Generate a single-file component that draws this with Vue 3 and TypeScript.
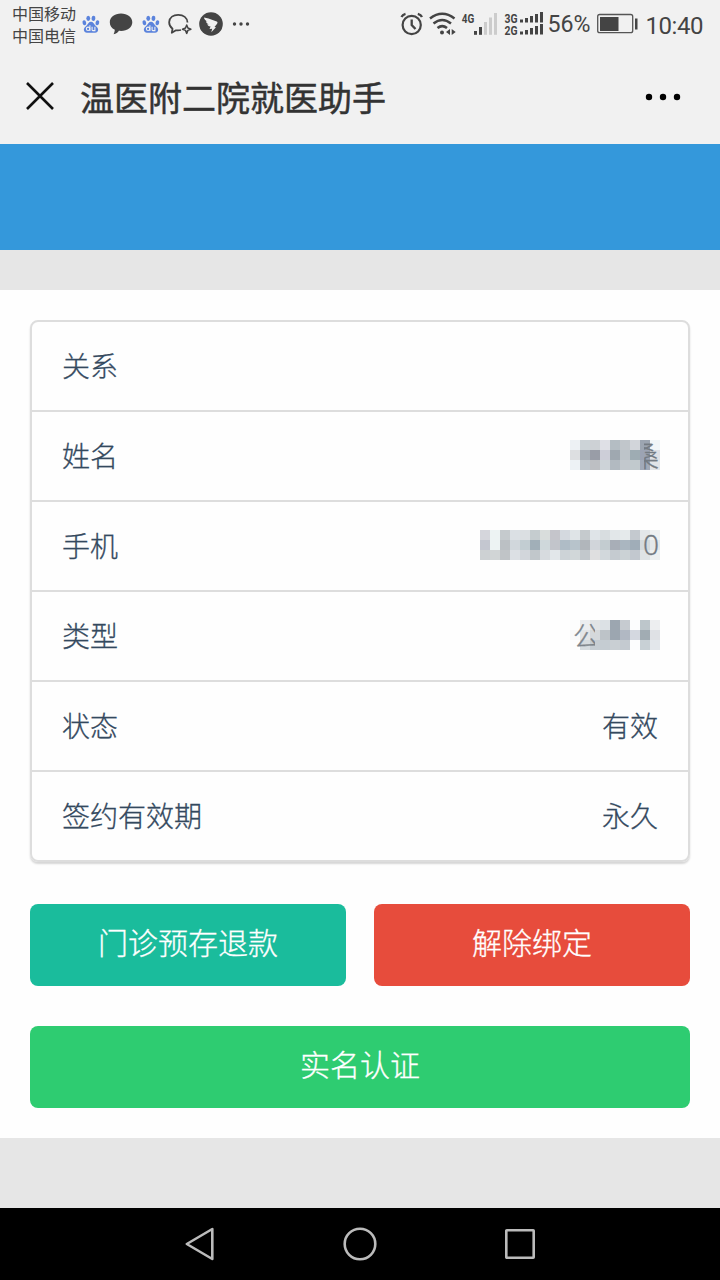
<script setup lang="ts">
interface Row {
  label: string
  value?: string
  mosaic?: string[][]
  hint?: string
  kind?: 'name' | 'phone' | 'type'
}

const rows: Row[] = [
  { label: '关系' },
  {
    label: '姓名',
    hint: '桑',
    kind: 'name',
    mosaic: [
      ['#edf1f4', '#ccd3d7', '#cdd1d5', '#dfe0e6', '#b4bdc3', '#c1c6cb', '#d2d5da', '#9ca5b1', '#f0f5f8'],
      ['#dddfe1', '#abb2ba', '#999da7', '#cdced8', '#9fa8b0', '#bdc4c9', '#9eacb3', '#9ca3b3', '#dfe1e6'],
      ['#edf2f5', '#c1c8ce', '#bdbfc3', '#cdd3d8', '#b2bac1', '#c2c8cd', '#c1c9cd', '#a1a9b7', '#e1e4e8'],
    ],
  },
  {
    label: '手机',
    hint: '0',
    kind: 'phone',
    mosaic: [
      ['#d5d6dc', '#edf3f3', '#c5cacd', '#dbe0e4', '#dbdfe2', '#c5cccf', '#d9dddc', '#c5c5cb', '#d4d9df', '#dfe4e7', '#c5cacd', '#dfe4e8', '#d8dde0', '#e2e7e9', '#e5eaeb', '#c4c9cf', '#e4e7e9', '#eef1f2'],
      ['#c4c7d0', '#edf3f3', '#bbc0c4', '#d1d7dc', '#c2cdd2', '#a1afb8', '#cfd8db', '#c2c5cb', '#afbcc6', '#b7c3cb', '#b1b6bb', '#d1d5da', '#c3ccd0', '#a8aeb7', '#aab6c0', '#a0adb8', '#d4dadd', '#e4e8ea'],
      ['#cdd1d3', '#d1d5d6', '#c0c4c7', '#dce0e4', '#d2d6db', '#c1c7cb', '#d7dbdf', '#e2e7ea', '#cdd3d7', '#d1d7d9', '#c2c8cc', '#dfdfe0', '#d2d8dc', '#c5cbd0', '#cbd2d5', '#c2c8cf', '#dfe3e5', '#edf0f1'],
    ],
  },
  {
    label: '类型',
    hint: '公',
    kind: 'type',
    mosaic: [
      ['#fdfdfd', '#eceeef', '#e1e4e6', '#dce1e5', '#9ca6b0', '#c6cbd0', '#fcfdfe', '#bdc6cb', '#edeef0'],
      ['#f9f9f9', '#e3e5e7', '#d5d8db', '#bdc3c8', '#9ca6b0', '#b1b8c3', '#d4d8e0', '#a1acb3', '#dfe1e5'],
      ['#fdfdfd', '#d5dbdf', '#c6cdd3', '#c5ccd2', '#c9cfd3', '#c4cad0', '#fcfdfe', '#c8d0d5', '#e3e7eb'],
    ],
  },
  { label: '状态', value: '有效' },
  { label: '签约有效期', value: '永久' },
]
</script>

<template>
  <div class="screen">
    <header class="status">
      <div class="carriers"><span>中国移动</span><span>中国电信</span></div>
      <svg v-for="n in 2" :key="n" class="paw" :class="'paw' + n" viewBox="0 0 22 22">
        <g fill="#5b83dc">
          <ellipse cx="3.7" cy="9.7" rx="2" ry="2.8" transform="rotate(-15 3.7 9.7)" />
          <ellipse cx="8" cy="4.8" rx="2.1" ry="2.9" />
          <ellipse cx="13.7" cy="4.8" rx="2.1" ry="2.9" transform="rotate(8 13.7 4.8)" />
          <ellipse cx="18" cy="9.7" rx="2" ry="2.8" transform="rotate(15 18 9.7)" />
          <path d="M11 8.6C8.6 8.6 8 11 6 12.8 3 15.2 2.6 17 3.6 19 4.6 21 7 20.6 11 20.6S17.4 21 18.4 19C19.4 17 19 15.2 16 12.8 14 11 13.4 8.6 11 8.6Z" />
        </g>
        <g fill="none" stroke="#f1f1f1" stroke-width="1.2">
          <circle cx="7.8" cy="16.3" r="1.9" /><path d="M9.8 12.5V18.6M12.2 14V17.2Q12.2 18.3 13.4 18.3H15.3V14" />
        </g>
      </svg>
      <svg class="chat" viewBox="0 0 24 24"><path fill="#444" d="M12 1.5C5.6 1.5.8 5.2.8 10.3c0 3.5 1.8 6 5 7.5-.2 2-.6 3.4-1.2 4.5 2.5-.5 4.3-1.9 5.3-3.5.7.1 1.4.1 2.1.1 6.5 0 11.3-3.5 11.3-8.6S18.4 1.5 12 1.5Z" /></svg>
      <svg class="spark" viewBox="0 0 24 24" fill="none" stroke="#444" stroke-width="1.8" stroke-linejoin="round">
        <path d="M13 18C11.300 18.500 9.800 18.600 8 18.300L3.800 20.800 4.500 16.800C2.200 15 1 12.800 1.200 10 1.600 5.500 5.300 2.900 10.200 2.900 15.500 2.900 19.200 5.800 19.500 10.500" />
        <path d="M18.700 13 19.900 16 22.900 17.200 19.900 18.400 18.700 21.400 17.500 18.400 14.500 17.200 17.500 16Z" stroke-width="1.500" />
      </svg>
      <svg class="bird" viewBox="0 0 24 24"><circle cx="12" cy="12" r="11.800" fill="#444" /><path fill="#f1f1f1" d="M5 5.400 9.500 6.600 17.700 9.400C19 9.900 18.500 11 17.700 12.200L15.500 15.100 17 15.300 12.300 20.300 13.200 16.800 10.500 17 11.600 14.400C9.500 14.300 8.600 13.500 8.300 12.300L10 12.200C7.800 11.400 7.200 10.600 7 9.200L8.500 9.400C6.300 8.400 5.200 7 5 5.400Z" /></svg>
      <svg class="more" viewBox="0 0 18 6" fill="#444"><circle cx="2.500" cy="3" r="1.700" /><circle cx="9" cy="3" r="1.700" /><circle cx="15.500" cy="3" r="1.700" /></svg>
      <svg class="signals" viewBox="400 0 320 48">
        <g fill="none" stroke="#444" stroke-width="2.200">
          <circle cx="411.700" cy="25" r="9.100" />
          <path d="M411.700 19.500V25L415.500 29M401.500 17Q402.500 14.600 405.500 13.800M417.800 13.800Q421 14.600 422 17" stroke-width="2.300" />
          <path d="M430 18.500Q442.200 9 454.500 18.500" stroke-width="2.500" />
          <path d="M433.500 23.500Q442.200 16.500 451 23.500M437.500 28Q442.200 24.200 447 28" stroke-width="2.500" />
        </g>
        <g fill="#444">
          <circle cx="442" cy="32.500" r="2" /><path d="M450 29V35L446 32ZM451.700 29V35L455.700 32Z" />
          <g class="net">
            <text x="461.800" y="22.500" textLength="12.500" lengthAdjust="spacingAndGlyphs">4G</text>
            <text x="504.500" y="22.500" textLength="13" lengthAdjust="spacingAndGlyphs">3G</text>
            <text x="504.500" y="34.800" textLength="13" lengthAdjust="spacingAndGlyphs">2G</text>
          </g>
          <rect x="474" y="31" width="3" height="3.800" /><rect x="479" y="27" width="3" height="7.800" />
          <g fill="#ccc"><rect x="484" y="22" width="3" height="12.800" /><rect x="489" y="17.500" width="3" height="17.300" /><rect x="494" y="13" width="3" height="21.800" /></g>
          <rect x="520" y="19.500" width="3" height="3" /><rect x="525" y="18" width="3" height="4.500" /><rect x="530" y="16" width="3" height="6.500" /><rect x="535" y="14" width="3" height="8.500" /><rect x="540" y="12" width="3" height="10.500" />
          <rect x="520" y="31.500" width="3" height="3" /><rect x="525" y="30" width="3" height="4.500" /><rect x="530" y="28" width="3" height="6.500" /><rect x="535" y="26" width="3" height="8.500" /><rect x="540" y="24" width="3" height="10.500" />
          <text x="547.500" y="32" class="num" textLength="43" lengthAdjust="spacingAndGlyphs">56%</text>
          <rect x="600" y="17" width="18.500" height="14" /><rect x="635" y="18.500" width="2.500" height="11" />
          <text x="645.500" y="33.500" class="num clock" textLength="58" lengthAdjust="spacing">10:40</text>
        </g>
        <rect x="597.700" y="14.500" width="35" height="18.200" rx="2" fill="none" stroke="#555" stroke-width="1.300" />
      </svg>
    </header>

    <div class="titlebar">
      <svg class="close" viewBox="0 0 28 28"><path d="M1 1 27 27M27 1 1 27" fill="none" stroke="#111" stroke-width="2.600" /></svg>
      <h1>温医附二院就医助手</h1>
      <svg class="menu" viewBox="0 0 36 8"><circle cx="4" cy="4" r="3.200" /><circle cx="18" cy="4" r="3.200" /><circle cx="32" cy="4" r="3.200" /></svg>
    </div>

    <div class="banner"></div>

    <main>
      <section class="card">
        <div v-for="row in rows" :key="row.label" class="row">
          <span>{{ row.label }}</span>
          <span v-if="row.value">{{ row.value }}</span>
          <div v-if="row.mosaic" class="masked">
            <svg :width="row.mosaic[0].length * 10" height="30" shape-rendering="crispEdges">
              <template v-for="(line, y) in row.mosaic" :key="y">
                <rect v-for="(c, x) in line" :key="x" :x="x * 10" :y="y * 10" width="10" height="10" :fill="c" />
              </template>
            </svg>
            <span class="hint" :class="row.kind">{{ row.hint }}</span>
          </div>
        </div>
      </section>
      <div class="actions">
        <button class="teal">门诊预存退款</button>
        <button class="red">解除绑定</button>
      </div>
      <button class="green">实名认证</button>
    </main>

    <nav>
      <svg viewBox="0 0 36 36"><path d="M4.800 18 30.300 3V33Z" /></svg>
      <svg viewBox="0 0 36 36"><circle cx="18" cy="18" r="15.300" /></svg>
      <svg viewBox="0 0 36 36"><rect x="4.300" y="4.300" width="27.400" height="27.400" rx=".5" /></svg>
    </nav>
  </div>
</template>

<style>
body { margin: 0; }
</style>

<style scoped>
.screen {
  width: 720px;
  height: 1280px;
  overflow: hidden;
  display: flex;
  flex-direction: column;
  background: #e6e6e6;
  font-family: "Noto Sans CJK SC", sans-serif;
}
svg { display: block; flex: none; }
.status {
  height: 48px;
  display: flex;
  align-items: center;
  background: #f1f1f1;
  color: #444;
}
.carriers {
  width: 64px;
  margin-left: 12px;
  display: flex;
  flex-direction: column;
  font-size: 16px;
  line-height: 22px;
}
.paw { width: 20px; height: 22px; order: 1; margin-left: 5px; }
.chat { width: 24px; height: 24px; order: 2; margin-left: 8px; }
.paw2 { order: 3; margin-left: 8px; }
.spark { width: 24px; height: 24px; order: 4; margin-left: 7px; }
.bird { width: 24px; height: 24px; order: 5; margin-left: 7px; }
.more { width: 18px; height: 6px; order: 6; margin-left: 9px; }
.signals { width: 320px; height: 48px; order: 7; margin-left: auto; }
.net { font: 700 12.5px Roboto, sans-serif; }
.num { font: 400 24px Roboto, sans-serif; }
.clock { font-size: 24px; }
.titlebar {
  height: 96px;
  display: flex;
  align-items: center;
  background: #f1f1f1;
}
.close { width: 28px; height: 28px; margin-left: 26px; }
h1 {
  margin: 0 auto 0 26px;
  padding-top: 2px;
  font-size: 34px;
  font-weight: 400;
  -webkit-text-stroke: .5px #333;
  line-height: 48px;
  color: #333;
}
.menu { width: 36px; height: 8px; margin-right: 39px; margin-top: 2px; }
.banner { height: 106px; background: #3498db; }
main {
  box-sizing: border-box;
  height: 848px;
  margin-top: 40px;
  padding: 30px;
  background: #fefefe;
}
.card {
  box-sizing: border-box;
  height: 542px;
  border: 2px solid #ddd;
  border-radius: 8px;
  box-shadow: 0 2px 2px rgba(0, 0, 0, .16);
}
.row {
  box-sizing: border-box;
  height: 90px;
  padding: 0 30px 2px;
  display: flex;
  justify-content: space-between;
  align-items: center;
  border-bottom: 2px solid #ddd;
  font-size: 28px;
  font-weight: 300;
  -webkit-text-stroke: .3px currentColor;
  color: #34495e;
}
.row:last-child { height: 88px; border: 0; }
.masked { position: relative; margin-right: -2px; }
.hint {
  position: absolute;
  top: 0;
  line-height: 30px;
  color: #737a82;
}
.name { right: 1px; clip-path: inset(0 0 0 13px); }
.phone { right: 1px; top: -1px; font-family: "Noto Sans", sans-serif; }
.type { left: 3px; opacity: .9; clip-path: inset(0 6px 0 0); }
.actions { display: flex; gap: 28px; margin: 42px 0 40px; }
button {
  flex: 1;
  height: 82px;
  padding: 0 0 8px;
  border: 0;
  border-radius: 8px;
  color: #fff;
  font: 300 30px "Noto Sans CJK SC", sans-serif;
  -webkit-text-stroke: .3px #fff;
}
.teal { background: #1abc9c; }
.red { background: #e74c3c; }
.green { width: 100%; display: block; background: #2ecc71; }
nav {
  height: 72px;
  margin-top: auto;
  display: flex;
  justify-content: center;
  align-items: center;
  gap: 124px;
  background: #000;
}
nav svg { width: 36px; height: 36px; fill: none; stroke: #bbb; stroke-width: 2.600; stroke-linejoin: round; }
</style>
